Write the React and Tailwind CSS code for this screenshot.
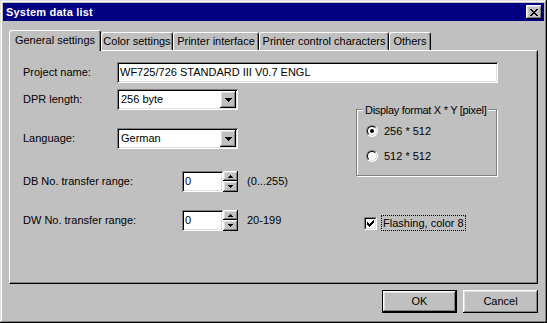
import React from "react";

const raised =
  "shadow-[inset_-1px_-1px_0_#000,inset_1px_1px_0_#fff,inset_-2px_-2px_0_#808080,inset_2px_2px_0_#dfdfdf]";
const sunken =
  "shadow-[inset_1px_1px_0_#808080,inset_-1px_-1px_0_#fff,inset_2px_2px_0_#000,inset_-2px_-2px_0_#dfdfdf]";

function Pixels({ w, h, rows }) {
  const rects = [];
  rows.forEach((r, y) => {
    for (let x = 0; x < r.length; x++) {
      if (r[x] === "X") rects.push(<rect key={x + "-" + y} x={x} y={y} width="1" height="1" />);
    }
  });
  return (
    <svg width={w} height={h} viewBox={`0 0 ${w} ${h}`} shapeRendering="crispEdges" fill="#000">
      {rects}
    </svg>
  );
}

const closeGlyph = ["XX....XX", ".XX..XX.", "..XXXX..", "...XX...", "..XXXX..", ".XX..XX.", "XX....XX"];
const downArrow = ["XXXXXXX", ".XXXXX.", "..XXX..", "...X..."];
const smallUp = ["..X..", ".XXX.", "XXXXX"];
const smallDown = ["XXXXX", ".XXX.", "..X.."];
const checkGlyph = ["......X", ".....XX", "X...XXX", "XX.XXX.", "XXXXX..", ".XXX...", "..X...."];

function Combo({ value }) {
  return (
    <div className={`w-[121px] h-[21px] bg-white ${sunken} flex items-center p-[2px]`}>
      <span className="flex-1 pl-[2px]">{value}</span>
      <div className={`w-[16px] h-[17px] bg-[#c0c0c0] ${raised} flex items-center justify-center`}>
        <Pixels w={7} h={4} rows={downArrow} />
      </div>
    </div>
  );
}

function Spinner({ value }) {
  return (
    <div className="flex h-[21px]">
      <div className={`w-[41px] h-[21px] bg-white ${sunken} flex items-center pl-[3px]`}>{value}</div>
      <div className="flex flex-col w-[15px] h-[21px]">
        <div className={`h-[10px] bg-[#c0c0c0] ${raised} flex items-center justify-center`}>
          <Pixels w={5} h={3} rows={smallUp} />
        </div>
        <div className={`h-[11px] bg-[#c0c0c0] ${raised} flex items-center justify-center`}>
          <Pixels w={5} h={3} rows={smallDown} />
        </div>
      </div>
    </div>
  );
}

function Radio({ checked }) {
  return (
    <div className="w-[12px] h-[12px] rounded-full border border-t-[#808080] border-l-[#808080] border-b-white border-r-white">
      <div className="w-full h-full rounded-full border border-t-black border-l-black border-b-[#dfdfdf] border-r-[#dfdfdf] bg-white flex items-center justify-center">
        {checked && <div className="w-[4px] h-[4px] rounded-full bg-black" />}
      </div>
    </div>
  );
}

const tabBase =
  "border-t border-l border-r border-white border-r-black shadow-[inset_-1px_0_0_#808080] rounded-t-[3px] flex justify-center bg-[#c0c0c0] whitespace-nowrap";

export default function App() {
  return (
    <div
      className={`w-[547px] h-[323px] bg-[#c0c0c0] font-['Liberation_Sans',Arial,sans-serif] text-[11px] leading-none text-black p-[3px] flex flex-col shadow-[inset_-1px_-1px_0_#000,inset_1px_1px_0_#dfdfdf,inset_-2px_-2px_0_#808080,inset_2px_2px_0_#fff]`}
    >
      {/* Title bar */}
      <div className="h-[18px] bg-[#000080] flex items-center pl-[3px] pr-[2px]">
        <span className="text-white font-bold text-[11px] tracking-[0.2px]">System data list</span>
        <div className={`ml-auto w-[16px] h-[14px] bg-[#c0c0c0] ${raised} flex items-center justify-center`}>
          <Pixels w={8} h={7} rows={closeGlyph} />
        </div>
      </div>

      {/* Body */}
      <div className="flex flex-col pl-[6px] pt-[9px]">
        {/* Tabs */}
        <div className="flex items-end h-[20px]">
          <div className={`${tabBase} w-[92px] h-[21px] -mb-px pt-[4px] relative z-10`}>General settings</div>
          <div className={`${tabBase} w-[72px] h-[18px] pt-[3px]`}>Color settings</div>
          <div className={`${tabBase} w-[86px] h-[18px] pt-[3px]`}>Printer interface</div>
          <div className={`${tabBase} w-[130px] h-[18px] pt-[3px]`}>Printer control characters</div>
          <div className={`${tabBase} w-[42px] h-[18px] pt-[3px]`}>Others</div>
        </div>

        {/* Panel */}
        <div className="w-[529px] h-[234px] border-t border-l border-r border-b border-white border-r-black border-b-black shadow-[inset_-1px_-1px_0_#808080]">
          <div className="flex flex-col pl-[13px] pt-[11px]">
            <div className="flex items-center h-[21px]">
              <span className="w-[94px]">Project name:</span>
              <div className={`w-[381px] h-[21px] bg-white ${sunken} flex items-center pl-[3px]`}>
                WF725/726 STANDARD III V0.7 ENGL
              </div>
            </div>

            <div className="flex mt-[6px]">
              {/* left column */}
              <div className="w-[333px] flex flex-col">
                <div className="flex items-center h-[21px]">
                  <span className="w-[94px]">DPR length:</span>
                  <Combo value="256 byte" />
                </div>
                <div className="flex items-center h-[21px] mt-[18px]">
                  <span className="w-[94px]">Language:</span>
                  <Combo value="German" />
                </div>
                <div className="flex items-center h-[21px] mt-[22px]">
                  <span className="w-[159px]">DB No. transfer range:</span>
                  <Spinner value="0" />
                  <span className="ml-[9px]">(0...255)</span>
                </div>
                <div className="flex items-center h-[21px] mt-[18px]">
                  <span className="w-[159px]">DW No. transfer range:</span>
                  <Spinner value="0" />
                  <span className="ml-[9px]">20-199</span>
                </div>
              </div>

              {/* right column */}
              <div className="flex flex-col">
                <div className="relative mt-[20px] w-[141px] h-[67px] border border-[#808080] shadow-[inset_1px_1px_0_#fff,1px_1px_0_#fff]">
                  <span className="absolute left-[6px] -top-[5px] px-[2px] bg-[#c0c0c0] whitespace-nowrap tracking-[-0.3px]">
                    Display format X * Y [pixel]
                  </span>
                  <div className="flex flex-col pl-[9px] pt-[15px]">
                    <div className="flex items-center h-[12px] gap-[6px]">
                      <Radio checked />
                      <span>256 * 512</span>
                    </div>
                    <div className="flex items-center h-[12px] gap-[6px] mt-[13px]">
                      <Radio />
                      <span>512 * 512</span>
                    </div>
                  </div>
                </div>
                <div className="flex items-center mt-[39px] pl-[8px]">
                  <div className="w-[13px] h-[13px] border border-t-[#808080] border-l-[#808080] border-b-white border-r-white">
                    <div className="w-full h-full border border-t-black border-l-black border-b-[#dfdfdf] border-r-[#dfdfdf] bg-white flex items-center justify-center">
                      <Pixels w={7} h={7} rows={checkGlyph} />
                    </div>
                  </div>
                  <span className="ml-[4px] h-[16px] px-[1px] border border-dotted border-black flex items-center whitespace-nowrap">
                    Flashing, color 8
                  </span>
                </div>
              </div>
            </div>
          </div>
        </div>

        {/* Buttons */}
        <div className="flex justify-end gap-[6px] mt-[6px] pr-[6px]">
          <div className="w-[75px] h-[23px] border border-black">
            <div className={`w-full h-full ${raised} flex items-center justify-center`}>OK</div>
          </div>
          <div className={`w-[75px] h-[23px] ${raised} flex items-center justify-center`}>Cancel</div>
        </div>
      </div>
    </div>
  );
}
